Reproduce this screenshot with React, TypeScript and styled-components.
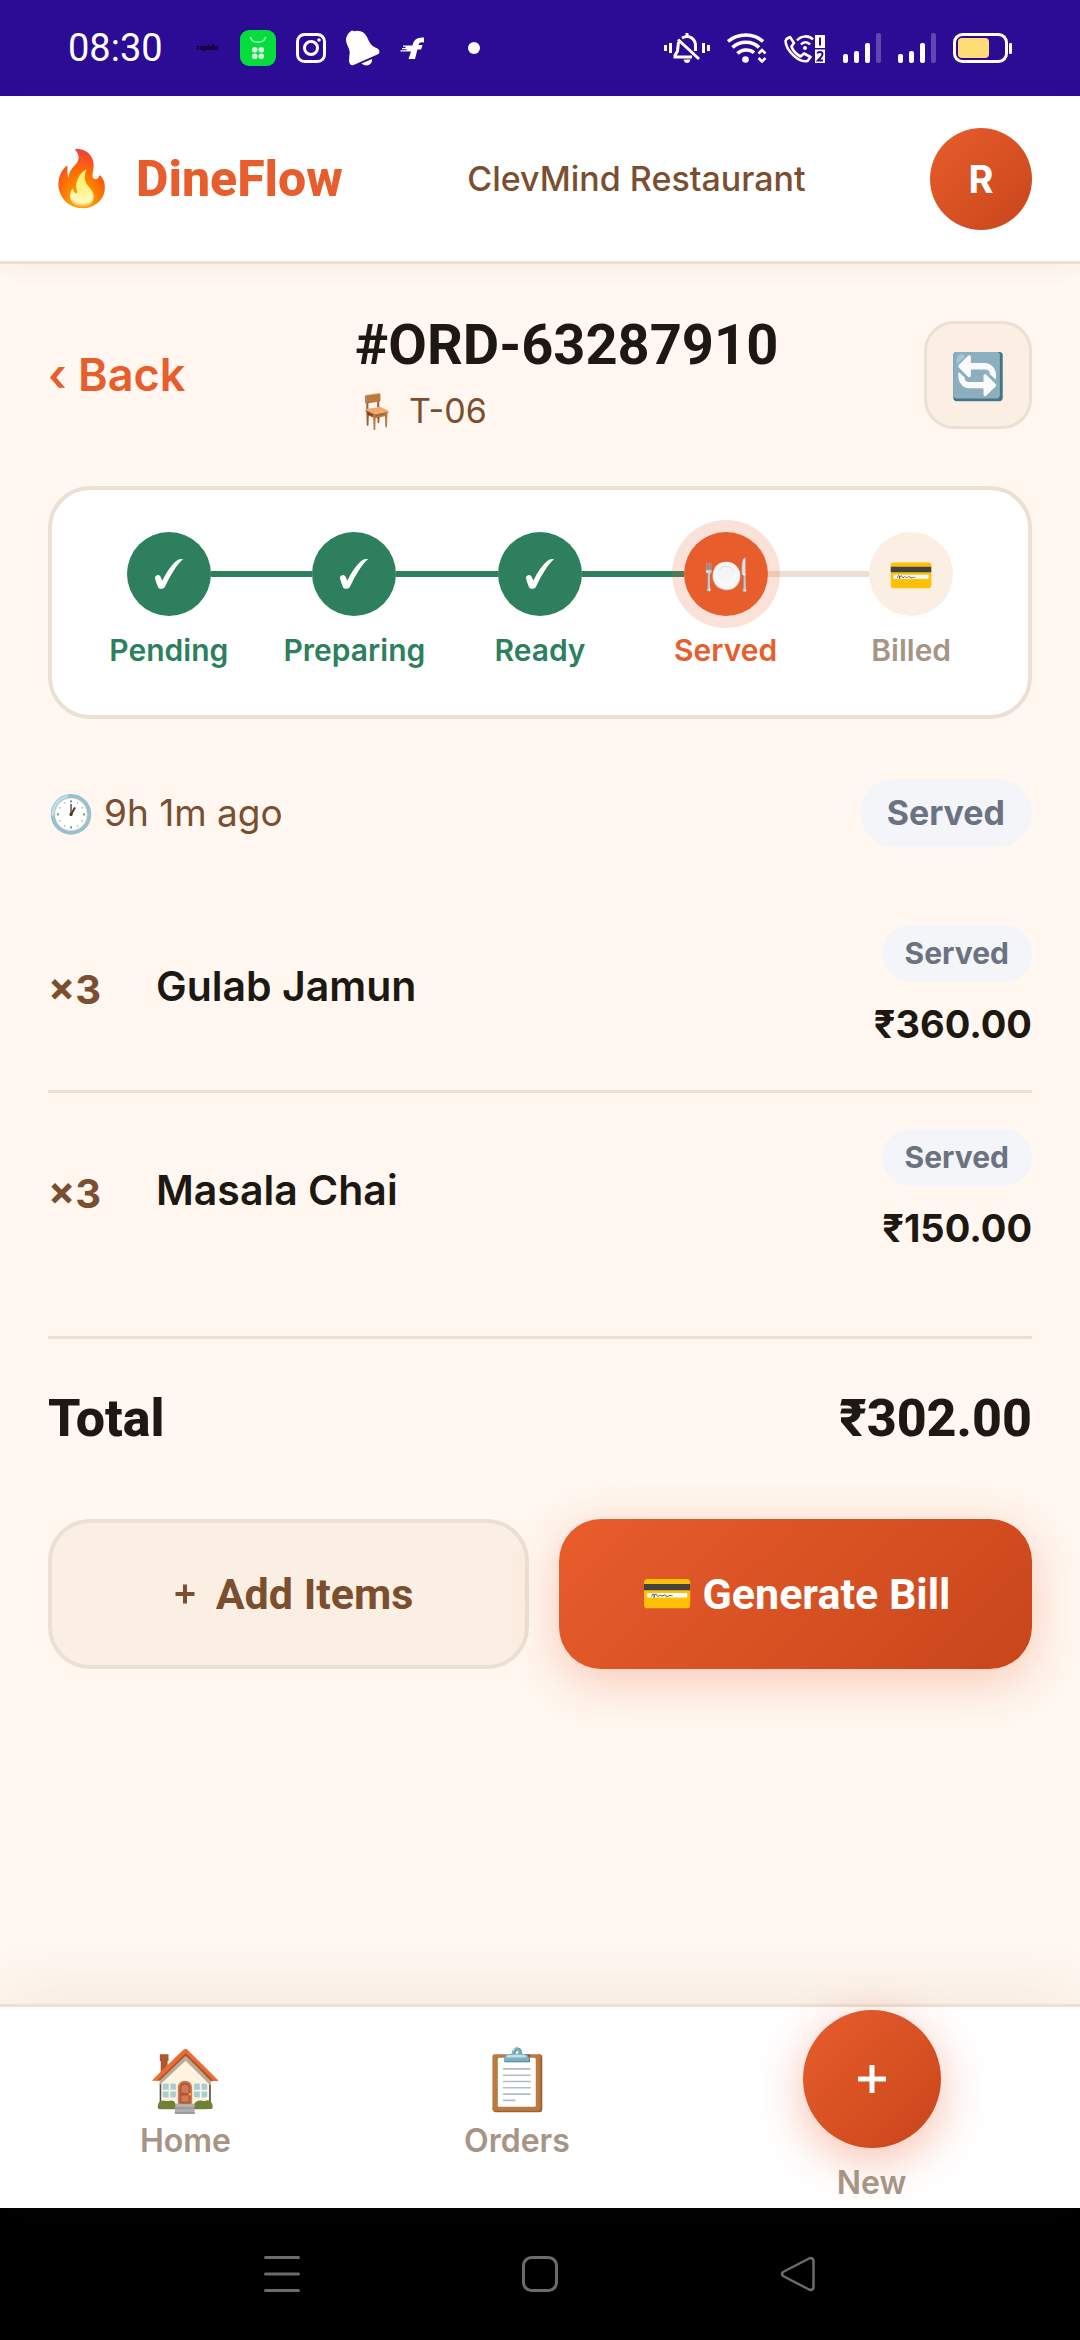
import React from 'react';
import styled, { createGlobalStyle } from 'styled-components';

const color = {
  status: '#2c0b95',
  page: '#fff7f0',
  cream: '#fbeee2',
  line: '#ece0d4',
  orange: '#e85d2c',
  orangeDark: '#c8461b',
  brown: '#7a4e2e',
  ink: '#1e1812',
  muted: '#a69485',
  green: '#2d7f5e',
  pill: '#f3f5f8',
  pillText: '#6b7280',
};

const GlobalStyle = createGlobalStyle`
  *, *::before, *::after { box-sizing: border-box; }
  body { margin: 0; background: ${color.page}; }
  button { font: inherit; color: inherit; border: 0; padding: 0; background: none; cursor: pointer; }
  a { text-decoration: none; color: inherit; }
  h1, p, ul, ol { margin: 0; padding: 0; }
  ul, ol { list-style: none; }
`;

const Screen = styled.div`
  min-height: 100vh;
  display: flex;
  flex-direction: column;
  font-family: Inter, Roboto, sans-serif;
  color: ${color.ink};
  background: ${color.page};
`;

/* ---------- status bar ---------- */

const StatusBar = styled.div`
  height: 96px;
  padding: 0 68px;
  display: flex;
  align-items: center;
  justify-content: space-between;
  background: ${color.status};
  color: #fff;
`;

const StatusGroup = styled.div<{ $gap: number }>`
  display: flex;
  align-items: center;
  gap: ${(p) => p.$gap}px;
`;

const Clock = styled.span`
  font: 400 38px/48px Roboto, sans-serif;
  margin-right: 14px;
`;

const TinyBrand = styled.span`
  font: 700 7px/10px Inter, sans-serif;
  color: #05020f;
  margin-right: 2px;
`;

const Dot = styled.span`
  width: 12px;
  height: 12px;
  margin-left: 24px;
  border-radius: 50%;
  background: #fff;
`;

/* ---------- app header ---------- */

const Header = styled.header`
  position: relative;
  height: 168px;
  padding: 0 48px;
  display: flex;
  align-items: center;
  justify-content: space-between;
  background: #fff;
  border-bottom: 3px solid ${color.line};
  box-shadow: 0 3px 24px rgba(122, 78, 46, 0.06);
`;

const Brand = styled.a`
  display: flex;
  align-items: center;
  gap: 21px;
  font: 800 50px/60px Roboto, sans-serif;
  color: ${color.orange};
`;

const RestaurantName = styled.span`
  font-size: 34px;
  line-height: 48px;
  font-weight: 500;
  color: ${color.brown};
`;

const Avatar = styled.button`
  width: 102px;
  height: 102px;
  border-radius: 50%;
  background: linear-gradient(135deg, ${color.orange}, ${color.orangeDark});
  color: #fff;
  font-size: 38px;
  font-weight: 700;
`;

/* ---------- order ---------- */

const Main = styled.main`
  flex: 1;
  padding: 48px 48px 0;
  display: flex;
  flex-direction: column;
`;

const TitleRow = styled.div`
  display: flex;
  align-items: center;
  justify-content: space-between;
  margin-bottom: 48px;
`;

const BackLink = styled.a`
  padding-right: 24px;
  font-size: 45px;
  line-height: 60px;
  font-weight: 600;
  color: ${color.orange};
`;

const OrderNumber = styled.h1`
  margin-bottom: 6px;
  font: 700 56px/66px Roboto, sans-serif;
`;

const TableLine = styled.p`
  display: flex;
  align-items: center;
  gap: 12px;
  font-size: 34px;
  line-height: 54px;
  color: ${color.brown};
`;

const RefreshButton = styled.button`
  width: 108px;
  height: 108px;
  display: grid;
  place-items: center;
  border-radius: 30px;
  border: 3px solid ${color.line};
  background: ${color.cream};
`;

const Emoji = styled.span<{ $size: number }>`
  font-size: ${(p) => p.$size}px;
  line-height: 1;
`;

const Card = styled.section`
  padding: 42px 24px 42px;
  border: 4px solid ${color.line};
  border-radius: 42px;
  background: #fff;
`;

const Steps = styled.ol`
  display: grid;
  grid-template-columns: repeat(5, 1fr);
`;

type StepState = 'done' | 'current' | 'next';

const stepFill = { done: color.green, current: color.orange, next: color.cream };
const stepText = { done: color.green, current: color.orange, next: color.muted };

const Track = styled.div`
  display: flex;
  align-items: center;
`;

const Connector = styled.span<{ $tone: string }>`
  flex: 1;
  height: 6px;
  background: ${(p) => p.$tone};
`;

const StepCircle = styled.span<{ $state: StepState }>`
  position: relative;
  width: 84px;
  height: 84px;
  display: grid;
  place-items: center;
  border-radius: 50%;
  background: ${(p) => stepFill[p.$state]};
  box-shadow: ${(p) => (p.$state === 'current' ? '0 0 0 12px rgba(232, 93, 44, 0.18)' : 'none')};
`;

const StepLabel = styled.span<{ $state: StepState }>`
  display: block;
  margin-top: 12px;
  text-align: center;
  font-size: 30px;
  line-height: 45px;
  font-weight: 600;
  color: ${(p) => stepText[p.$state]};
`;

const MetaRow = styled.div`
  margin: 60px 0 42px;
  display: flex;
  align-items: center;
  justify-content: space-between;
`;

const Elapsed = styled.span`
  display: flex;
  align-items: center;
  gap: 10px;
  font-size: 37px;
  line-height: 60px;
  color: ${color.brown};
`;

const Pill = styled.span<{ $small?: boolean }>`
  padding: ${(p) => (p.$small ? '6px 23px' : '9px 27px')};
  border-radius: 40px;
  background: ${color.pill};
  color: ${color.pillText};
  font-size: ${(p) => (p.$small ? 30 : 34)}px;
  line-height: ${(p) => (p.$small ? 45 : 50)}px;
  font-weight: 700;
`;

const Item = styled.li`
  padding: 36px 0;
  display: flex;
  align-items: center;

  & + & {
    border-top: 3px solid ${color.line};
  }
`;

const Quantity = styled.span`
  width: 108px;
  font-size: 40px;
  line-height: 60px;
  font-weight: 700;
  color: ${color.brown};
`;

const ItemName = styled.span`
  flex: 1;
  padding-bottom: 8px;
  font-size: 41px;
  line-height: 60px;
  font-weight: 600;
`;

const ItemSide = styled.div`
  display: flex;
  flex-direction: column;
  align-items: flex-end;
  gap: 12px;
`;

const Price = styled.span`
  font-size: 38px;
  line-height: 60px;
  font-weight: 700;
`;

const TotalRow = styled.div`
  margin-top: 42px;
  padding: 48px 0 69px;
  display: flex;
  justify-content: space-between;
  border-top: 3px solid ${color.line};
  font: 800 52px/63px Roboto, sans-serif;
`;

const Actions = styled.div`
  display: flex;
  gap: 30px;
`;

const ActionButton = styled.button<{ $primary?: boolean }>`
  box-sizing: content-box;
  flex: 1 1 0;
  min-height: 142px;
  display: flex;
  align-items: center;
  justify-content: center;
  gap: 10px;
  border: ${(p) => (p.$primary ? '0' : `4px solid ${color.line}`)};
  border-radius: 42px;
  background: ${(p) =>
    p.$primary ? `linear-gradient(135deg, ${color.orange}, ${color.orangeDark})` : color.cream};
  box-shadow: ${(p) => (p.$primary ? '0 12px 48px rgba(232, 93, 44, 0.3)' : 'none')};
  color: ${(p) => (p.$primary ? '#fff' : color.brown)};
  font: 700 43px/60px Roboto, sans-serif;
`;

/* ---------- tab bar ---------- */

const TabBar = styled.nav`
  position: relative;
  height: 204px;
  display: grid;
  grid-template-columns: 371fr 292fr 417fr;
  background: #fff;
  border-top: 3px solid ${color.line};
  box-shadow: 0 -12px 60px rgba(122, 78, 46, 0.08);
`;

const Tab = styled.a<{ $raised?: boolean }>`
  display: flex;
  flex-direction: column;
  align-items: center;
  padding-top: ${(p) => (p.$raised ? 3 : 42)}px;
  gap: ${(p) => (p.$raised ? 12 : 9)}px;
  font-size: 32px;
  line-height: 45px;
  font-weight: 600;
  color: ${color.muted};
`;

const Fab = styled.span`
  width: 138px;
  height: 138px;
  display: grid;
  place-items: center;
  border-radius: 50%;
  background: linear-gradient(135deg, ${color.orange}, ${color.orangeDark});
  box-shadow: 0 12px 48px rgba(232, 93, 44, 0.4);
`;

/* ---------- system navigation ---------- */

const SystemNav = styled.div`
  height: 132px;
  display: flex;
  align-items: center;
  justify-content: center;
  gap: 222px;
  background: #000;
`;

const SystemButton = styled.button`
  width: 36px;
  height: 36px;
  display: block;
`;

const Icon = styled.svg`
  display: block;
  flex: none;
`;

const Signal = () => (
  <Icon width="38" height="30" viewBox="0 0 38 30" fill="#fff">
    <rect x="0" y="21" width="5" height="9" rx="2" />
    <rect x="11" y="18" width="5" height="12" rx="2" />
    <rect x="22" y="10" width="5" height="20" rx="2" />
    <rect x="33" y="0" width="5" height="30" rx="2" opacity=".25" />
  </Icon>
);

const Check = () => (
  <Icon width="28" height="30" viewBox="0 0 28 30" fill="#fff">
    <path d="M0 18.5C0 17 2.4 15.800 4 16.200c1.600.4 2.400 3 3.200 5.600C11.500 13 17 5 22 1.400 24 .1 26.500-.1 28 .2 21.500 6 15.500 16 10.600 26.500c-1 2.400-2 3.100-4 3.200-2.400.1-3.200-.5-4-2.500C1.500 24.500.2 20.800 0 18.500z" />
  </Icon>
);

const Plus = () => (
  <Icon width="42" height="42" viewBox="0 0 42 42" stroke="currentColor" strokeWidth="4">
    <path d="M11.500 21h19M21 11.500v19" />
  </Icon>
);

const steps: { label: string; state: StepState; icon?: string }[] = [
  { label: 'Pending', state: 'done' },
  { label: 'Preparing', state: 'done' },
  { label: 'Ready', state: 'done' },
  { label: 'Served', state: 'current', icon: '🍽️' },
  { label: 'Billed', state: 'next', icon: '💳' },
];

const items = [
  { name: 'Gulab Jamun', quantity: 3, price: '₹360.00' },
  { name: 'Masala Chai', quantity: 3, price: '₹150.00' },
];

const connectorTone = (index: number) => {
  if (index < 1 || index >= steps.length) return 'transparent';
  return steps[index].state === 'next' ? color.line : color.green;
};

export default function App() {
  return (
    <Screen>
      <GlobalStyle />
      <StatusBar>
        <StatusGroup $gap={20}>
          <Clock>08:30</Clock>
          <TinyBrand>rapido</TinyBrand>
          <Icon width="36" height="36" viewBox="0 0 36 36">
            <rect width="36" height="36" rx="9" fill="#05dd3c" />
            <path d="M10.500 7c1 7 14 7 15 0" fill="none" stroke="#b9ffc6" strokeWidth="1.500" />
            <g fill="#d9ffe0">
              <rect x="12" y="17" width="5.500" height="5.500" rx="2.500" />
              <rect x="18.500" y="17" width="5.500" height="5.500" rx="2.500" />
              <rect x="12" y="23.500" width="5.500" height="5.500" rx="2.500" />
              <rect x="18.500" y="23.500" width="5.500" height="5.500" rx="2.500" />
            </g>
          </Icon>
          <Icon width="30" height="30" viewBox="0 0 30 30" fill="none" stroke="#fff" strokeWidth="3">
            <rect x="1.500" y="1.500" width="27" height="27" rx="7" />
            <circle cx="15" cy="15" r="6.500" />
            <circle cx="23" cy="7" r="1.800" fill="#fff" stroke="none" />
          </Icon>
          <Icon width="34" height="36" viewBox="0 0 34 36" fill="#fff">
            <path d="M4.500 1.500Q6-.5 8 1.200 17-.8 21 7c3 6.500 4 9 10.500 11.500 2.500 1.500 2.500 4.500.5 5.800L7.500 35Q4 36 3 31.500L3.400 25C5 19 0 15 0 10Q0 5 4.500 1.500z" />
            <path d="M15.500 33.500 26 29c.8 4-3 7-6.500 6.300-2-.3-3.200-1-4-1.800z" />
          </Icon>
          <Icon width="24" height="22" viewBox="0 0 24 22" fill="#fff">
            <path d="M24 .5v5c-3.500-.8-5 0-5.500 2.500h4l-1.400 4.500h-3.700L15 22H8.500l2.500-7.500H.5v-1.300h6v-1H2V11h3.500V9.800H3V8.500h9.500C13.500 3 17 0 24 .5z" />
          </Icon>
          <Dot />
        </StatusGroup>
        <StatusGroup $gap={17}>
          <Icon width="46" height="30" viewBox="0 0 46 30" fill="none" stroke="#fff" strokeWidth="3">
            <path d="M1.500 12v6M6.500 10v10M39.500 10v10M44.500 12v6M23 0v4" />
            <path d="M18 5c8-4 13.500 1.500 13.500 8v5M14.500 9l-1 9-2.500 4.500v1.500h17M14 6.500 35 26" />
            <path d="M19.500 26.500h7q-1 3.500-3.500 3.500t-3.500-3.500z" fill="#fff" stroke="none" />
          </Icon>
          <Icon width="40" height="30" viewBox="0 0 40 30" fill="none" stroke="#fff" strokeWidth="3.500">
            <path d="M1 8.500C11-.2 27-.2 36 8.500M5.500 14.500c7-7 20-7 26.500 0M10.500 20.500c4-4.500 12-4.800 16.500-.8" />
            <circle cx="18.500" cy="26.500" r="3.300" fill="#fff" stroke="none" />
            <path d="m31.500 20.500 3.500-3.500 3.500 3.500M31.500 25l3.500 3.500 3.500-3.500" strokeWidth="2.600" />
          </Icon>
          <Icon width="42" height="30" viewBox="0 0 42 30" fill="none" stroke="#fff" strokeWidth="2.600">
            <path d="M2.500 6 6 4l4 6-2.500 3.500C9 18 12 21 16.500 23.500L20 20.500l6.500 3.500-3 4C14 30 2 17 1.500 8z" strokeLinejoin="round" />
            <path d="M13 7.500c4-5 12-5.500 16-1M17 11.500c2.500-3 6.500-3 9 0" />
            <circle cx="21" cy="15" r="2" fill="#fff" stroke="none" />
            <path d="M31 2h10v13H31zM31 16.500h10V30H31z" fill="#fff" stroke="none" />
            <path d="M36 4.500v8M33.500 20.500q0-1.500 2.500-1.500t2.500 2-4.500 6.500h5" stroke={color.status} strokeWidth="2" />
          </Icon>
          <Signal />
          <Signal />
          <Icon width="59" height="30" viewBox="0 0 59 30" fill="none">
            <rect x="1.500" y="1.500" width="52" height="27" rx="8" stroke="#fff" strokeWidth="3" />
            <rect x="5" y="5" width="31" height="20" rx="4" fill="#ffdc75" />
            <rect x="56" y="10" width="3" height="11" rx="1" fill="#fff" />
          </Icon>
        </StatusGroup>
      </StatusBar>

      <Header>
        <Brand href="#">
          <Emoji $size={54}>🔥</Emoji>
          DineFlow
        </Brand>
        <RestaurantName>ClevMind Restaurant</RestaurantName>
        <Avatar>R</Avatar>
      </Header>

      <Main>
        <TitleRow>
          <BackLink href="#">‹ Back</BackLink>
          <div>
            <OrderNumber>#ORD-63287910</OrderNumber>
            <TableLine>
              <Emoji $size={34}>🪑</Emoji>
              T-06
            </TableLine>
          </div>
          <RefreshButton aria-label="Refresh">
            <Emoji $size={45}>🔄</Emoji>
          </RefreshButton>
        </TitleRow>

        <Card>
          <Steps>
            {steps.map((step, i) => (
              <li key={step.label}>
                <Track>
                  <Connector $tone={connectorTone(i)} />
                  <StepCircle $state={step.state}>
                    {step.icon ? <Emoji $size={37}>{step.icon}</Emoji> : <Check />}
                  </StepCircle>
                  <Connector $tone={connectorTone(i + 1)} />
                </Track>
                <StepLabel $state={step.state}>{step.label}</StepLabel>
              </li>
            ))}
          </Steps>
        </Card>

        <MetaRow>
          <Elapsed>
            <Emoji $size={37}>🕐</Emoji>
            9h 1m ago
          </Elapsed>
          <Pill>Served</Pill>
        </MetaRow>

        <ul>
          {items.map((item) => (
            <Item key={item.name}>
              <Quantity>×{item.quantity}</Quantity>
              <ItemName>{item.name}</ItemName>
              <ItemSide>
                <Pill $small>Served</Pill>
                <Price>{item.price}</Price>
              </ItemSide>
            </Item>
          ))}
        </ul>

        <TotalRow>
          <span>Total</span>
          <span>₹302.00</span>
        </TotalRow>

        <Actions>
          <ActionButton>
            <Plus />
            Add Items
          </ActionButton>
          <ActionButton $primary>
            <Emoji $size={42}>💳</Emoji>
            Generate Bill
          </ActionButton>
        </Actions>
      </Main>

      <TabBar>
        <Tab href="#">
          <Emoji $size={60}>🏠</Emoji>
          Home
        </Tab>
        <Tab href="#">
          <Emoji $size={60}>📋</Emoji>
          Orders
        </Tab>
        <Tab href="#" $raised>
          <Fab>
            <Icon width="28" height="28" viewBox="0 0 28 28" stroke="#fff" strokeWidth="5">
              <path d="M0 14h28M14 0v28" />
            </Icon>
          </Fab>
          New
        </Tab>
      </TabBar>

      <SystemNav>
        <SystemButton aria-label="Recent apps">
          <Icon width="36" height="36" viewBox="0 0 36 36" stroke="#6b6b6b" strokeWidth="3" strokeLinecap="round">
            <path d="M1.500 1.500h33M1.500 18h33M1.500 34.500h33" />
          </Icon>
        </SystemButton>
        <SystemButton aria-label="Home screen">
          <Icon width="36" height="36" viewBox="0 0 36 36" fill="none" stroke="#6b6b6b" strokeWidth="3">
            <rect x="1.500" y="1.500" width="33" height="33" rx="8" />
          </Icon>
        </SystemButton>
        <SystemButton aria-label="Go back">
          <Icon width="36" height="36" viewBox="0 0 36 36" fill="none" stroke="#6b6b6b" strokeWidth="2.500" strokeLinejoin="round">
            <path d="M30 2 3 16q-2 2 0 4l27 14q3.500 0 3.500-3V5q0-3-3.500-3z" />
          </Icon>
        </SystemButton>
      </SystemNav>
    </Screen>
  );
}
